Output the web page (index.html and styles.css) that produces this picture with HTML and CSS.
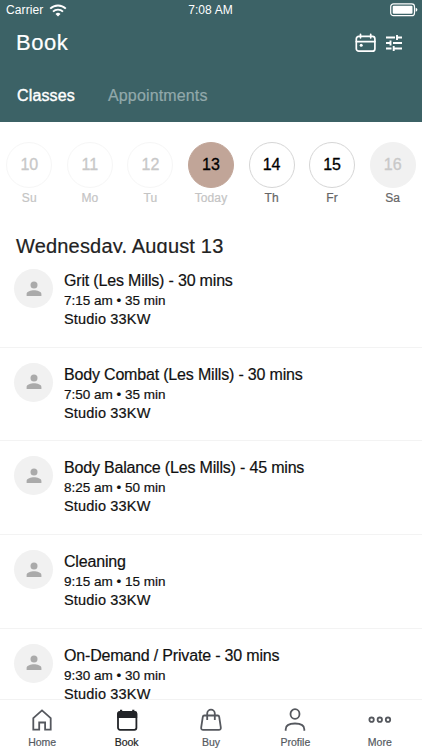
FILE: index.html
```html
<!DOCTYPE html>
<html lang="en">
<head>
<meta charset="utf-8">
<title>Book</title>
<link rel="stylesheet" href="styles.css">
</head>
<body>
<svg class="defs" width="0" height="0" aria-hidden="true">
  <symbol id="person" viewBox="0 0 16 16"><circle cx="8" cy="4.100" r="3.500"/><path d="M.6 15v-2.100C.6 10.400 5 9.200 8 9.200s7.400 1.200 7.400 3.700V15z"/></symbol>
</svg>
<header class="header">
  <div class="status">
    <div class="carrier"><span>Carrier</span>
      <svg width="18" height="13" viewBox="0 0 18 13" fill="none" stroke="#fff" stroke-width="1.900"><path d="M1.200 4.700a11 11 0 0 1 15.600 0M4 7.700a7.100 7.100 0 0 1 10 0"/><path d="M9 12.500 6.500 9.900a3.600 3.600 0 0 1 5 0z" fill="#fff" stroke="none"/></svg>
    </div>
    <span class="clock">7:08 AM</span>
    <svg class="battery" width="28" height="14" viewBox="0 0 28 14"><rect x=".7" y=".9" width="23.800" height="11.800" rx="2.800" fill="none" stroke="#fff" stroke-width="1.200"/><rect x="2.700" y="2.800" width="19.800" height="8" rx="1" fill="#fff"/><path d="M25.700 4.800q1.700.5 1.700 2t-1.700 2z" fill="#fff"/></svg>
  </div>
  <div class="bar">
    <h1 class="title">Book</h1>
    <div class="actions">
      <svg width="22" height="20" viewBox="0 0 22 20" fill="none" stroke="#fff" stroke-width="1.700" stroke-linecap="round"><rect x="1.300" y="3.400" width="18.600" height="14.800" rx="2.500"/><path d="M1.300 8.600h18.600M5.500 1.300v3.500M15.700 1.300v3.500"/><circle cx="6.200" cy="12.200" r="1.500" fill="#fff" stroke="none"/></svg>
      <svg width="18" height="18" viewBox="0 0 18 18" fill="none" stroke="#fff" stroke-width="1.900"><path d="M1 3.500h9M12 3.500h5M12 .9v5.200M1 9h4.500M5.500 6.400v5.200M8 9h9M1 14.500h5.500M8.700 11.900v5.200M8.700 14.500H17"/></svg>
    </div>
  </div>
  <nav class="tabs"><span class="tab tab-active">Classes</span><span class="tab">Appointments</span></nav>
</header>
<section class="dates">
  <div class="day past"><span class="circle">10</span><span class="name">Su</span></div>
  <div class="day past"><span class="circle">11</span><span class="name">Mo</span></div>
  <div class="day past"><span class="circle">12</span><span class="name">Tu</span></div>
  <div class="day today"><span class="circle">13</span><span class="name">Today</span></div>
  <div class="day"><span class="circle">14</span><span class="name">Th</span></div>
  <div class="day"><span class="circle">15</span><span class="name">Fr</span></div>
  <div class="day closed"><span class="circle">16</span><span class="name">Sa</span></div>
</section>
<h2 class="heading">Wednesday, August 13</h2>
<main class="list">
  <article class="row"><div class="avatar"><svg width="16" height="16"><use href="#person"/></svg></div><div class="info"><div class="class-name">Grit (Les Mills) - 30 mins</div><div class="time">7:15 am • 35 min</div><div class="place">Studio 33KW</div></div></article>
  <article class="row"><div class="avatar"><svg width="16" height="16"><use href="#person"/></svg></div><div class="info"><div class="class-name">Body Combat (Les Mills) - 30 mins</div><div class="time">7:50 am • 35 min</div><div class="place">Studio 33KW</div></div></article>
  <article class="row"><div class="avatar"><svg width="16" height="16"><use href="#person"/></svg></div><div class="info"><div class="class-name">Body Balance (Les Mills) - 45 mins</div><div class="time">8:25 am • 50 min</div><div class="place">Studio 33KW</div></div></article>
  <article class="row"><div class="avatar"><svg width="16" height="16"><use href="#person"/></svg></div><div class="info"><div class="class-name">Cleaning</div><div class="time">9:15 am • 15 min</div><div class="place">Studio 33KW</div></div></article>
  <article class="row"><div class="avatar"><svg width="16" height="16"><use href="#person"/></svg></div><div class="info"><div class="class-name">On-Demand / Private - 30 mins</div><div class="time">9:30 am • 30 min</div><div class="place">Studio 33KW</div></div></article>
</main>
<nav class="bottom">
  <div class="item"><svg width="24" height="26" viewBox="0 0 24 26"><path d="M3.300 11.200 12 3.400l8.700 7.800v11.500h-5.600v-7.200H9.200v7.200H3.300z"/></svg><span>Home</span></div>
  <div class="item item-active"><svg width="24" height="26" viewBox="0 0 24 26"><rect x="3" y="5" width="18.400" height="17.800" rx="2"/><path class="solid" d="M2.200 11V6.500q0-2.300 2.300-2.300H5V2.800h2.200v1.400h10V2.800h2.200v1.400h.5q2.300 0 2.300 2.300V11z"/></svg><span>Book</span></div>
  <div class="item"><svg width="24" height="26" viewBox="0 0 24 26"><path d="M5.300 8.500h13.400q1.300 0 1.500 1.300l1.600 10.600q.3 2.500-2 2.500H4.200q-2.300 0-2-2.500L3.800 9.800q.2-1.300 1.500-1.300zM8.200 13V6.500a3.800 3.800 0 0 1 7.600 0V13"/></svg><span>Buy</span></div>
  <div class="item"><svg width="24" height="26" viewBox="0 0 24 26"><ellipse cx="12" cy="7" rx="4.500" ry="4.900"/><path d="M2.700 23.800v-1.600q0-5.700 9.300-5.700t9.300 5.700v1.600"/></svg><span>Profile</span></div>
  <div class="item"><svg width="24" height="26" viewBox="0 0 24 26"><circle cx="3.600" cy="12.700" r="2.200"/><circle cx="11.800" cy="12.700" r="2.200"/><circle cx="20" cy="12.700" r="2.200"/></svg><span>More</span></div>
</nav>
</body>
</html>
```
FILE: styles.css
```css
* { box-sizing: border-box; }
body {
  margin: 0;
  height: 750px;
  overflow: hidden;
  display: flex;
  flex-direction: column;
  background: #fff;
  color: #111;
  font-family: "Liberation Sans", Arial, sans-serif;
}
svg { display: block; flex: none; }
.defs { display: none; }
.header { flex: none; height: 122px; background: #3c6266; color: #fff; }
.status {
  height: 20px;
  padding: 0 4px 0 6px;
  display: grid;
  grid-template-columns: 1fr auto 1fr;
  align-items: center;
  font-size: 12px;
  line-height: 20px;
}
.carrier { display: flex; gap: 6px; align-items: center; letter-spacing: .1px; }
.clock { margin-right: 3px; letter-spacing: .1px; }
.battery { justify-self: end; }
.bar { height: 45px; padding: 0 19px 0 16px; display: flex; align-items: center; justify-content: space-between; }
.title { margin: 0; font-size: 22px; font-weight: 400; line-height: 28px; letter-spacing: .55px; -webkit-text-stroke: .2px #fff; }
.actions { display: flex; align-items: center; gap: 8px; }
.tabs { display: flex; gap: 33px; padding: 21px 17px 0; font-size: 16px; line-height: 20px; letter-spacing: .15px; }
.tab { color: #92a9ab; -webkit-text-stroke: .2px currentColor; }
.tab-active { color: #fff; -webkit-text-stroke-width: .4px; }
.dates {
  flex: none;
  height: 112px;
  margin: 0 -1px;
  padding-top: 20px;
  display: grid;
  grid-template-columns: repeat(7, 1fr);
}
.day { display: flex; flex-direction: column; align-items: center; }
.circle {
  width: 46px;
  height: 46px;
  border: 1px solid #d6d6d6;
  border-radius: 50%;
  color: #000;
  font-size: 16px;
  line-height: 44px;
  text-align: center;
  -webkit-text-stroke: .3px currentColor;
}
.name { margin-top: 2px; color: #666; font-size: 12px; line-height: 16px; letter-spacing: .1px; -webkit-text-stroke: .2px currentColor; }
.past .circle { color: #c8c8c8; border-color: #f6f6f6; }
.past .name, .today .name { color: #c4c4c4; }
.today .circle { background: #c1a598; border-color: #c1a598; }
.closed .circle { background: #f1f1f1; border-color: #f1f1f1; color: #c8c8c8; }
.heading {
  flex: none;
  margin: 0 0 1px;
  height: 19px;
  padding-left: 16px;
  overflow: hidden;
  color: #222;
  font-size: 20px;
  font-weight: 400;
  line-height: 25px;
  letter-spacing: .18px;
  -webkit-text-stroke: .2px #222;
}
.list { flex: 1; min-height: 0; overflow: hidden; }
.row {
  height: 93.700px;
  padding: 15px 14px 0;
  display: flex;
  align-items: flex-start;
  gap: 11px;
  border-bottom: 1px solid #f3f3f3;
}
.avatar { width: 39px; height: 39px; border-radius: 50%; background: #f1f1f1; display: grid; place-items: center; fill: #aaa; }
.class-name { font-size: 16px; line-height: 22px; margin-top: 1px; letter-spacing: -.18px; }
.time { font-size: 13.500px; line-height: 18px; }
.place { font-size: 14.500px; line-height: 19px; letter-spacing: .17px; }
.info { color: #111; -webkit-text-stroke: .2px #111; }
.bottom {
  flex: none;
  height: 51px;
  padding-top: 7px;
  display: grid;
  grid-template-columns: repeat(5, 1fr);
  border-top: 1px solid #f2f2f2;
  background: #fff;
  color: #555a5f;
}
.item { display: flex; flex-direction: column; align-items: center; font-size: 10.500px; line-height: 14px; gap: 2px; -webkit-text-stroke: .2px currentColor; }
.item svg { fill: none; stroke: #55585e; stroke-width: 1.800; }
.item-active { color: #222; }
.item-active svg { stroke: #222428; }
.item .solid { fill: #222428; stroke: none; }
```
